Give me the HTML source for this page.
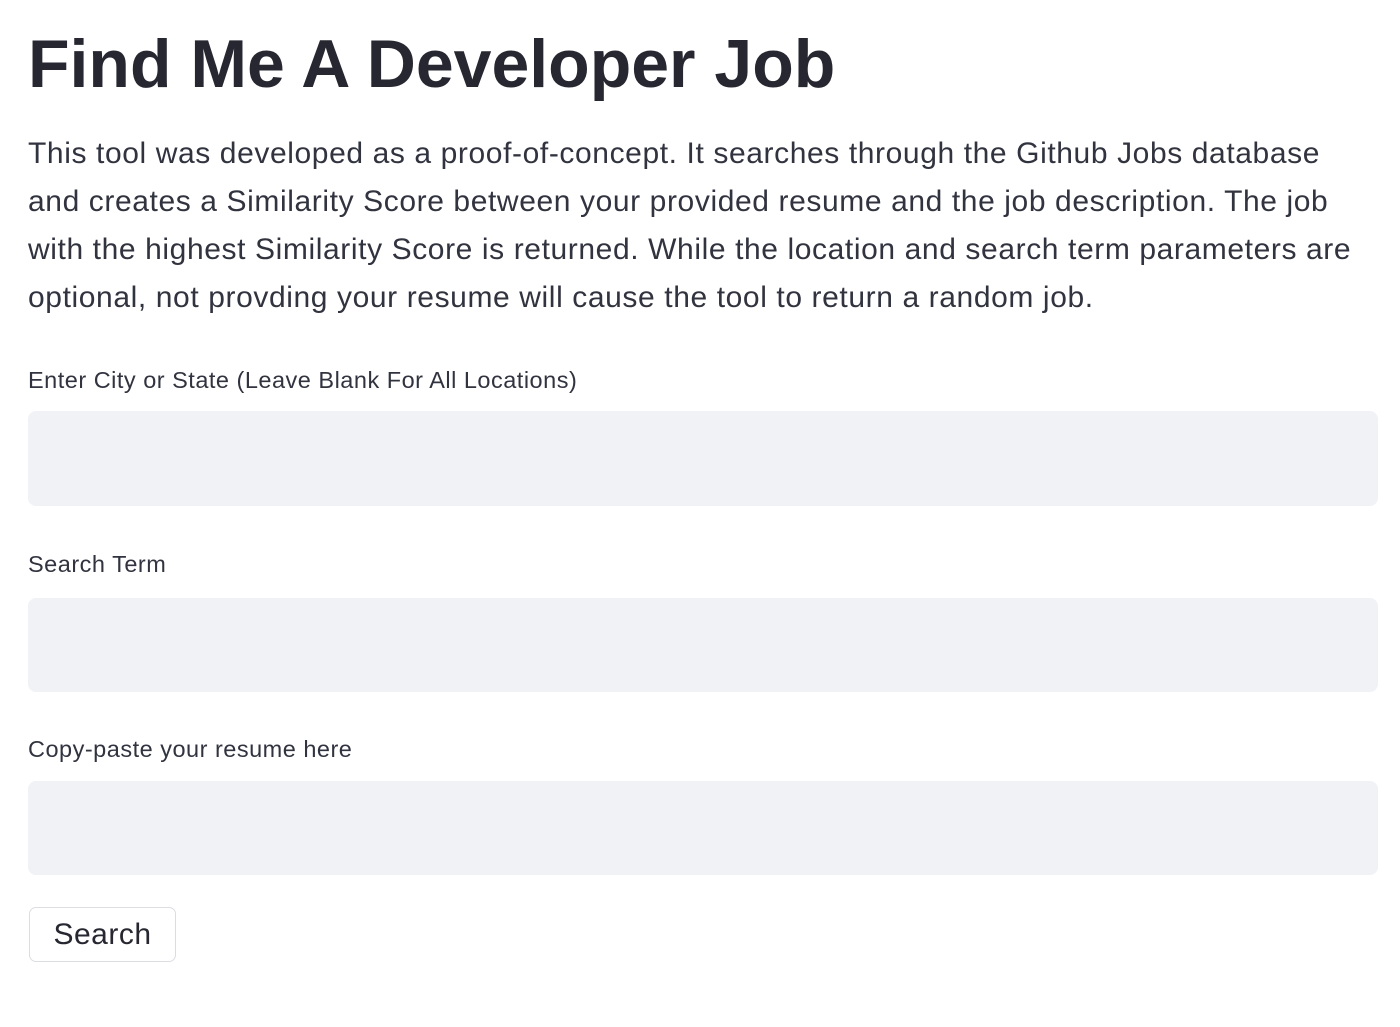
<!DOCTYPE html>
<html><head><meta charset="utf-8"><style>
html,body{margin:0;background:#fff;width:1400px;height:1027px;overflow:hidden;font-family:"Liberation Sans",sans-serif;color:#262730}
h1{position:absolute;left:28px;top:25px;margin:0;font-size:68px;font-weight:bold;letter-spacing:0px;color:#262730}
p{position:absolute;left:28px;top:130px;margin:0;width:1400px;white-space:nowrap;font-size:30px;line-height:48px;letter-spacing:0.6px;color:#31333f}
.l{position:absolute;left:28px;font-size:23.5px;letter-spacing:0.5px;color:#31333f}
.i{position:absolute;left:28px;width:1350px;height:95px;background:#f0f2f6;border-radius:8px}
.b{position:absolute;left:29px;top:907px;width:147px;height:55px;border:1px solid #dcdde2;border-radius:7px;box-sizing:border-box;font-size:30px;line-height:53px;text-align:center;color:#262730;letter-spacing:0.5px}
</style></head><body>
<h1>Find Me A Developer Job</h1>
<p>This tool was developed as a proof-of-concept. It searches through the Github Jobs database<br>and creates a Similarity Score between your provided resume and the job description. The job<br>with the highest Similarity Score is returned. While the location and search term parameters are<br>optional, not provding your resume will cause the tool to return a random job.</p>
<div class="l" style="top:367px">Enter City or State (Leave Blank For All Locations)</div>
<div class="i" style="top:411px"></div>
<div class="l" style="top:551px">Search Term</div>
<div class="i" style="top:598px;height:94px"></div>
<div class="l" style="top:736px">Copy-paste your resume here</div>
<div class="i" style="top:781px;height:94px"></div>
<div class="b">Search</div>
</body></html>
